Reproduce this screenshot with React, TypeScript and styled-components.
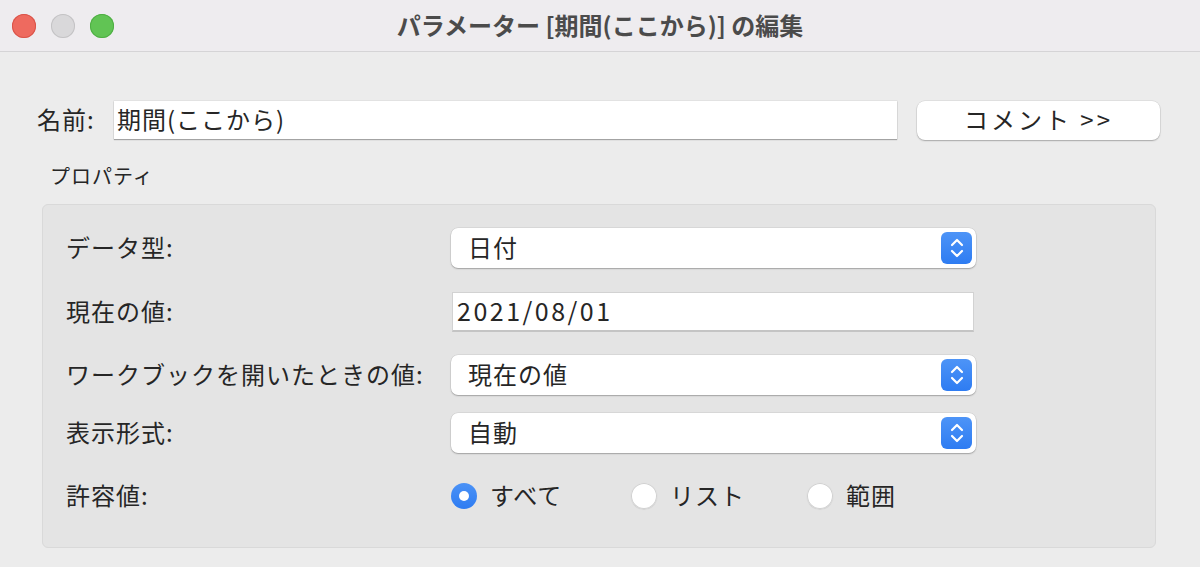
import React from "react";
import styled, { createGlobalStyle } from "styled-components";

const GlobalStyle = createGlobalStyle`
  html, body {
    margin: 0;
    padding: 0;
    background: #ececec;
  }
  body {
    font-family: "Noto Sans CJK JP", "Noto Sans", sans-serif;
    color: #262626;
  }
`;

const Window = styled.div`
  width: 1200px;
  height: 567px;
  background: #ececec;
  display: flex;
  flex-direction: column;
  overflow: hidden;
`;

const TitleBar = styled.div`
  height: 51px;
  flex-shrink: 0;
  background: #eeecef;
  border-bottom: 1px solid #d5d4d6;
  display: flex;
  align-items: center;
  position: relative;
  padding-left: 12px;
`;

const Lights = styled.div`
  display: flex;
  gap: 15px;
`;

const Light = styled.span<{ $color: string; $border: string }>`
  width: 24px;
  height: 24px;
  border-radius: 50%;
  background: ${(p) => p.$color};
  box-shadow: inset 0 0 0 1px ${(p) => p.$border};
`;

const Title = styled.div`
  position: absolute;
  left: 0;
  right: 0;
  text-align: center;
  font-size: 24px;
  font-weight: 700;
  color: #4b4b4b;
  pointer-events: none;
  margin-top: -3px;
`;

const Body = styled.div`
  padding: 48px 40px 0 37px;
  display: flex;
  flex-direction: column;
`;

const NameRow = styled.div`
  display: flex;
  align-items: center;
  height: 40px;
`;

const NameLabel = styled.label`
  font-size: 24px;
  letter-spacing: 1px;
  width: 77px;
  flex-shrink: 0;
  padding-bottom: 4px;
`;

const NameInput = styled.div`
  width: 783px;
  height: 38px;
  background: #fff;
  box-shadow: 0 1px 1px rgba(0, 0, 0, 0.28), 0 0 0 0.5px rgba(0, 0, 0, 0.08);
  font-size: 24px;
  letter-spacing: 1px;
  line-height: 35px;
  padding-left: 3px;
  box-sizing: border-box;
`;

const CommentButton = styled.button`
  margin-left: 20px;
  width: 243px;
  height: 39px;
  background: #fff;
  border: none;
  border-radius: 8px;
  box-shadow: 0 1px 1.5px rgba(0, 0, 0, 0.25), 0 0 0 0.5px rgba(0, 0, 0, 0.1);
  font-family: inherit;
  font-size: 24px;
  color: #262626;
  padding: 0 0 3px;
  letter-spacing: 3px;
  line-height: 36px;
`;

const GroupCaption = styled.div`
  font-size: 20px;
  letter-spacing: 1px;
  margin: 23px 0 0 13px;
  height: 26px;
  line-height: 26px;
`;

const GroupBox = styled.div`
  margin: 15px 0 0 5px;
  width: 1114px;
  height: 344px;
  box-sizing: border-box;
  background: #e4e4e4;
  border: 1px solid #d9d9d9;
  border-radius: 6px;
  padding: 23px 0 0 23px;
  display: flex;
  flex-direction: column;
`;

const Row = styled.div<{ $top: number }>`
  display: flex;
  align-items: center;
  height: 40px;
  margin-top: ${(p) => p.$top}px;
`;

const RowLabel = styled.div`
  width: 385px;
  flex-shrink: 0;
  font-size: 24px;
  letter-spacing: 1px;
  white-space: nowrap;
  padding-bottom: 4px;
`;

const Select = styled.div`
  width: 525px;
  height: 40px;
  box-sizing: border-box;
  background: #fff;
  border-radius: 7px;
  box-shadow: 0 1px 1.5px rgba(0, 0, 0, 0.25), 0 0 0 0.5px rgba(0, 0, 0, 0.1);
  display: flex;
  align-items: center;
  justify-content: space-between;
  padding: 0 4px 0 17px;
  font-size: 24px;
  letter-spacing: 1px;
`;

const SelectValue = styled.span`
  padding-bottom: 4px;
`;

const Stepper = styled.span`
  width: 31px;
  height: 32px;
  border-radius: 6px;
  background: linear-gradient(#4d94f7, #2e7cf2);
  display: flex;
  align-items: center;
  justify-content: center;
`;

const TextField = styled.div`
  width: 522px;
  height: 40px;
  margin-left: 1px;
  box-sizing: border-box;
  background: #fff;
  border: 1px solid #d2d2d2;
  border-bottom: 2px solid #c4c4c4;
  padding-left: 4px;
  font-size: 25px;
  letter-spacing: 2.5px;
  line-height: 34px;
`;

const RadioGroup = styled.div`
  display: flex;
  align-items: center;
`;

const RadioItem = styled.label<{ $width: number }>`
  display: flex;
  align-items: center;
  gap: 13px;
  width: ${(p) => p.$width}px;
  font-size: 24px;
  letter-spacing: 1px;
`;

const RadioText = styled.span`
  padding-bottom: 4px;
`;

const RadioDot = styled.span<{ $checked?: boolean }>`
  width: 26px;
  height: 26px;
  flex-shrink: 0;
  border-radius: 50%;
  box-sizing: border-box;
  display: flex;
  align-items: center;
  justify-content: center;
  background: ${(p) => (p.$checked ? "linear-gradient(#4b92f6, #2e7cf2)" : "#fff")};
  box-shadow: ${(p) =>
    p.$checked
      ? "none"
      : "inset 0 0 0 1px #d0d0d0, 0 0.5px 1px rgba(0,0,0,0.15)"};

  &::after {
    content: "";
    display: ${(p) => (p.$checked ? "block" : "none")};
    width: 10px;
    height: 10px;
    border-radius: 50%;
    background: #fff;
  }
`;

const Chevrons = () => (
  <svg width="16" height="22" viewBox="0 0 16 22" fill="none">
    <path
      d="M3 8 L8 3 L13 8"
      stroke="#fff"
      strokeWidth="2.2"
      strokeLinecap="round"
      strokeLinejoin="round"
    />
    <path
      d="M3 14 L8 19 L13 14"
      stroke="#fff"
      strokeWidth="2.2"
      strokeLinecap="round"
      strokeLinejoin="round"
    />
  </svg>
);

const PopUp: React.FC<{ value: string }> = ({ value }) => (
  <Select>
    <SelectValue>{value}</SelectValue>
    <Stepper>
      <Chevrons />
    </Stepper>
  </Select>
);

const Radio: React.FC<{ label: string; width: number; checked?: boolean }> = ({
  label,
  width,
  checked,
}) => (
  <RadioItem $width={width}>
    <RadioDot $checked={checked} />
    <RadioText>{label}</RadioText>
  </RadioItem>
);

export default function App() {
  return (
    <Window>
      <GlobalStyle />
      <TitleBar>
        <Lights>
          <Light $color="#ee6a5f" $border="#d9544a" />
          <Light $color="#d9d8da" $border="#c4c3c5" />
          <Light $color="#61c454" $border="#4fae44" />
        </Lights>
        <Title>パラメーター [期間(ここから)] の編集</Title>
      </TitleBar>
      <Body>
        <NameRow>
          <NameLabel>名前:</NameLabel>
          <NameInput>期間(ここから)</NameInput>
          <CommentButton type="button">コメント &gt;&gt;</CommentButton>
        </NameRow>
        <GroupCaption>プロパティ</GroupCaption>
        <GroupBox>
          <Row $top={0}>
            <RowLabel>データ型:</RowLabel>
            <PopUp value="日付" />
          </Row>
          <Row $top={24}>
            <RowLabel>現在の値:</RowLabel>
            <TextField>2021/08/01</TextField>
          </Row>
          <Row $top={23}>
            <RowLabel>ワークブックを開いたときの値:</RowLabel>
            <PopUp value="現在の値" />
          </Row>
          <Row $top={18}>
            <RowLabel>表示形式:</RowLabel>
            <PopUp value="自動" />
          </Row>
          <Row $top={23}>
            <RowLabel>許容値:</RowLabel>
            <RadioGroup>
              <Radio label="すべて" width={180} checked />
              <Radio label="リスト" width={176} />
              <Radio label="範囲" width={120} />
            </RadioGroup>
          </Row>
        </GroupBox>
      </Body>
    </Window>
  );
}
